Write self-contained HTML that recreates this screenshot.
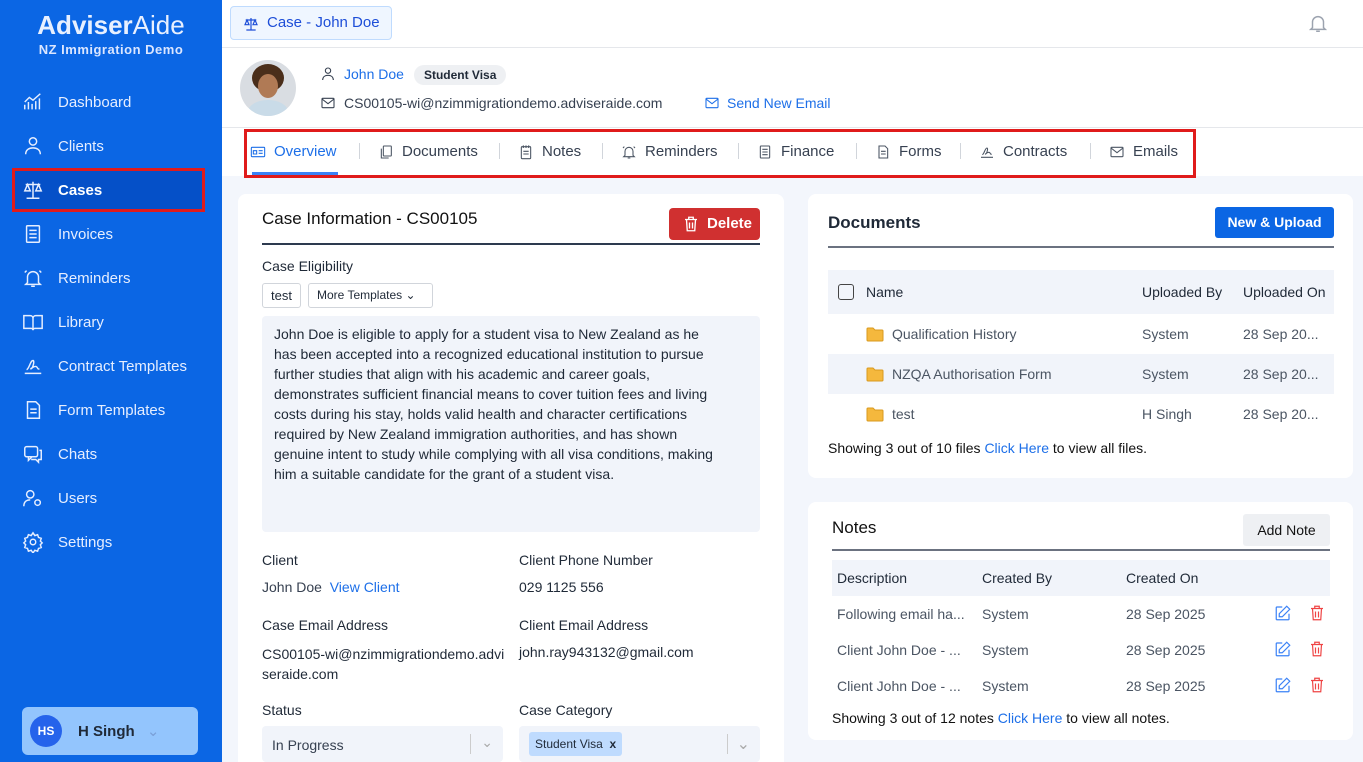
<!DOCTYPE html>
<html><head><meta charset="utf-8"><style>
*{box-sizing:border-box;margin:0;padding:0}
html,body{width:1363px;height:762px;overflow:hidden}
body{font-family:"Liberation Sans",sans-serif;background:#f3f6fc;position:relative;color:#1f2937}
.sb{position:absolute;left:0;top:0;width:222px;height:762px;background:#0b66e4;color:#fff}
.logo{position:absolute;top:10px;left:0;width:222px;text-align:center;font-size:26px;font-weight:bold;color:#e8f0ff}
.logo span{font-weight:normal}
.sub{position:absolute;top:42px;width:222px;text-align:center;font-size:13px;font-weight:bold;color:#dbe6ff;letter-spacing:.5px}
.nav{position:absolute;left:22px;font-size:15px;color:#e6eeff;display:flex;align-items:center;gap:14px}
.nav svg{width:22px;height:22px;stroke:#e6eeff;fill:none;stroke-width:1.6}
.act{position:absolute;left:12px;top:168px;width:193px;height:44px;background:#0550c8;border:3px solid #e01b1b}
.user{position:absolute;left:22px;top:707px;width:176px;height:48px;background:#93c5fd;border-radius:6px}
.hs{position:absolute;left:8px;top:8px;width:32px;height:32px;border-radius:50%;background:#2563eb;color:#fff;font-size:12px;font-weight:bold;text-align:center;line-height:32px}
.top{position:absolute;left:222px;top:0;right:0;height:48px;background:#fff;border-bottom:1px solid #e5e7eb}
.chip{position:absolute;left:8px;top:6px;width:162px;height:34px;border:1px solid #bfdbfe;background:#eff6ff;border-radius:4px;color:#1d4ed8;font-size:15px;line-height:32px;padding-left:36px}
.prof{position:absolute;left:222px;top:48px;right:0;height:80px;background:#fff;border-bottom:1px solid #e5e7eb}
.tabs{position:absolute;left:222px;top:128px;right:0;height:48px;background:#fff}
.tabbox{position:absolute;left:244px;top:129px;width:952px;height:49px;border:3px solid #e01b1b}
.tab{position:absolute;top:143px;font-size:15px;color:#374151;display:flex;align-items:center;gap:8px}
.tab svg,.ic{width:16px;height:16px;fill:none;stroke:#4b5563;stroke-width:1.6}
.sep{position:absolute;top:143px;width:1px;height:16px;background:#d1d5db}
.card{position:absolute;background:#fff;border-radius:8px}
.lbl{position:absolute;font-size:14px;color:#1f2937}
.val{position:absolute;font-size:14px;color:#374151}
a{color:#1d6fe8;text-decoration:none}
.row{position:absolute;left:828px;width:506px;height:40px;font-size:14px;color:#4b5563}
.fold{position:absolute;left:38px;top:12px;width:18px;height:16px}
.ed{position:absolute;left:442px;top:8px;width:18px;height:18px;fill:none;stroke:#3b82f6;stroke-width:1.6}
.tr{position:absolute;left:476px;top:8px;width:18px;height:18px;fill:none;stroke:#ef4444;stroke-width:1.6}
</style></head><body>
<div class="sb">
<div class="logo">Adviser<span>Aide</span></div>
<div class="sub">NZ Immigration Demo</div>
<div class="act"></div>
<div class="nav" style="top:91px"><svg viewBox="0 0 24 24"><path d="M3 20v-5M7 20v-8M11 20v-6M15 20v-9M19 20v-12M3 12l5-5 4 3 8-7"/></svg>Dashboard</div>
<div class="nav" style="top:135px"><svg viewBox="0 0 24 24"><circle cx="12" cy="7" r="4"/><path d="M4 21c0-5 4-7 8-7s8 2 8 7"/></svg>Clients</div>
<div class="nav" style="top:179px;font-weight:bold;color:#fff"><svg viewBox="0 0 24 24"><path d="M12 3v18M5 21h14M4 6h16M6 6l-3 7h6zM18 6l-3 7h6z"/></svg>Cases</div>
<div class="nav" style="top:223px"><svg viewBox="0 0 24 24"><rect x="5" y="3" width="14" height="18" rx="1"/><path d="M8 8h8M8 12h8M8 16h8"/></svg>Invoices</div>
<div class="nav" style="top:267px"><svg viewBox="0 0 24 24"><path d="M6 17V11a6 6 0 0112 0v6l2 2H4zM10 21h4M3 6l2-2M21 6l-2-2"/></svg>Reminders</div>
<div class="nav" style="top:311px"><svg viewBox="0 0 24 24"><path d="M2 5h7a3 3 0 013 3v13a2 2 0 00-2-2H2zM22 5h-7a3 3 0 00-3 3v13a2 2 0 012-2h8z"/></svg>Library</div>
<div class="nav" style="top:355px"><svg viewBox="0 0 24 24"><path d="M3 20h18M5 16c3-1 4-10 7-10 2 0 0 8-2 9s4-4 6-2 1 3 3 2"/></svg>Contract Templates</div>
<div class="nav" style="top:399px"><svg viewBox="0 0 24 24"><path d="M6 3h9l4 4v14H6z"/><path d="M9 11h7M9 15h7"/></svg>Form Templates</div>
<div class="nav" style="top:443px"><svg viewBox="0 0 24 24"><rect x="3" y="4" width="14" height="11" rx="2"/><path d="M7 15v4l4-4M19 8h2v10h-3v3l-3-3h-5"/></svg>Chats</div>
<div class="nav" style="top:487px"><svg viewBox="0 0 24 24"><circle cx="9" cy="8" r="4"/><path d="M2 21c0-5 3-7 7-7M17 14a3 3 0 100 6 3 3 0 000-6z"/></svg>Users</div>
<div class="nav" style="top:531px"><svg viewBox="0 0 24 24"><circle cx="12" cy="12" r="3"/><path d="M12 2l2 3 3-1 1 3 3 1-1 3 2 2-2 2 1 3-3 1-1 3-3-1-2 3-2-3-3 1-1-3-3-1 1-3-2-2 2-2-1-3 3-1 1-3 3 1z"/></svg>Settings</div>
<div class="user"><div class="hs">HS</div><div style="position:absolute;left:56px;top:15px;font-size:15px;font-weight:bold;color:#1f2937">H Singh <span style="color:#7aa0d8;font-weight:normal;margin-left:8px">⌄</span></div></div>
</div>
<div class="top"><div class="chip"><svg style="position:absolute;left:12px;top:9px" width="16" height="16" viewBox="0 0 24 24" fill="none" stroke="#1d4ed8" stroke-width="1.8"><path d="M12 3v18M5 21h14M4 6h16M6 6l-3 7h6zM18 6l-3 7h6z"/></svg>Case - John Doe</div>
<svg style="position:absolute;right:34px;top:12px" width="22" height="22" viewBox="0 0 24 24" fill="none" stroke="#9ca3af" stroke-width="1.6"><path d="M6 17V11a6 6 0 0112 0v6l2 2H4zM10 21h4"/></svg></div>
<div class="prof">
<div style="position:absolute;left:18px;top:12px;width:56px;height:56px;border-radius:50%;background:#d9dde2;overflow:hidden"><div style="position:absolute;left:12px;top:4px;width:32px;height:28px;border-radius:50%;background:#4a2e1a"></div><div style="position:absolute;left:18px;top:14px;width:20px;height:24px;border-radius:50%;background:#b07a55"></div><div style="position:absolute;left:8px;top:40px;width:40px;height:24px;border-radius:50%;background:#c9dbe8"></div></div>
<svg class="ic" style="position:absolute;left:98px;top:18px;stroke:#374151" viewBox="0 0 24 24"><circle cx="12" cy="7" r="4"/><path d="M4 21c0-5 4-7 8-7s8 2 8 7"/></svg>
<div style="position:absolute;left:122px;top:18px;font-size:14px;color:#1d6fe8">John Doe<span style="margin-left:10px;background:#eef0f3;color:#1f2937;font-size:12px;font-weight:bold;padding:3px 10px;border-radius:10px">Student Visa</span></div>
<svg class="ic" style="position:absolute;left:98px;top:47px;stroke:#374151" viewBox="0 0 24 24"><rect x="3" y="5" width="18" height="14" rx="1"/><path d="M3 6l9 7 9-7"/></svg>
<div style="position:absolute;left:122px;top:47px;font-size:14px;color:#374151">CS00105-wi@nzimmigrationdemo.adviseraide.com</div>
<svg class="ic" style="position:absolute;left:482px;top:47px;stroke:#1d6fe8" viewBox="0 0 24 24"><rect x="3" y="5" width="18" height="14" rx="1"/><path d="M3 6l9 7 9-7"/></svg>
<div style="position:absolute;left:505px;top:47px;font-size:14px;color:#1d6fe8">Send New Email</div>
</div>
<div class="tabs"><div style="position:absolute;left:30px;top:44px;width:86px;height:3px;background:#3b82f6"></div></div>
<div class="tabbox"></div>
<div class="tab" style="left:250px;color:#1d6fe8"><svg viewBox="0 0 24 24" style="stroke:#1d6fe8"><rect x="2" y="5" width="20" height="14" rx="1"/><path d="M5 10h5v5H5zM13 10h6M13 14h6"/></svg>Overview</div>
<div class="sep" style="left:359px"></div>
<div class="tab" style="left:378px"><svg viewBox="0 0 24 24"><rect x="8" y="3" width="12" height="15" rx="1"/><path d="M5 7v14h11"/></svg>Documents</div>
<div class="sep" style="left:499px"></div>
<div class="tab" style="left:518px"><svg viewBox="0 0 24 24"><rect x="5" y="4" width="14" height="18" rx="1"/><path d="M8 2v4M12 2v4M16 2v4M8 11h8M8 15h8"/></svg>Notes</div>
<div class="sep" style="left:602px"></div>
<div class="tab" style="left:621px"><svg viewBox="0 0 24 24"><path d="M6 17V11a6 6 0 0112 0v6l2 2H4zM10 21h4M3 6l2-2M21 6l-2-2"/></svg>Reminders</div>
<div class="sep" style="left:738px"></div>
<div class="tab" style="left:757px"><svg viewBox="0 0 24 24"><rect x="5" y="3" width="14" height="18" rx="1"/><path d="M8 8h8M8 12h8M8 16h8"/></svg>Finance</div>
<div class="sep" style="left:856px"></div>
<div class="tab" style="left:875px"><svg viewBox="0 0 24 24"><path d="M6 3h9l4 4v14H6z"/><path d="M9 11h7M9 15h7"/></svg>Forms</div>
<div class="sep" style="left:960px"></div>
<div class="tab" style="left:979px"><svg viewBox="0 0 24 24"><path d="M3 20h18M5 16c3-1 4-10 7-10 2 0 0 8-2 9s4-4 6-2 1 3 3 2"/></svg>Contracts</div>
<div class="sep" style="left:1090px"></div>
<div class="tab" style="left:1109px"><svg viewBox="0 0 24 24"><rect x="3" y="5" width="18" height="14" rx="1"/><path d="M3 6l9 7 9-7"/></svg>Emails</div>

<div class="card" style="left:238px;top:194px;width:546px;height:568px;border-radius:8px 8px 0 0"></div>
<div style="position:absolute;left:262px;top:209px;font-size:17px;color:#111">Case Information - CS00105</div>
<div style="position:absolute;left:669px;top:208px;width:91px;height:32px;background:#d03030;border-radius:4px;color:#fff;font-size:15px;font-weight:bold;line-height:32px;padding-left:38px"><svg style="position:absolute;left:13px;top:7px" width="18" height="18" viewBox="0 0 24 24" fill="none" stroke="#fff" stroke-width="1.8"><path d="M4 6h16M9 6V3h6v3M6 6l1 15h10l1-15M10 10v8M14 10v8"/></svg>Delete</div>
<div style="position:absolute;left:262px;top:243px;width:498px;height:2px;background:#2d3a4f"></div>
<div class="lbl" style="left:262px;top:258px">Case Eligibility</div>
<div style="position:absolute;left:262px;top:283px;width:39px;height:25px;border:1px solid #d1d5db;border-radius:3px;font-size:13px;text-align:center;line-height:23px">test</div>
<div style="position:absolute;left:308px;top:283px;width:125px;height:25px;border:1px solid #d1d5db;border-radius:3px;font-size:12px;padding-left:8px;line-height:23px">More Templates ⌄</div>
<div style="position:absolute;left:262px;top:316px;width:498px;height:216px;background:#f1f4fa;border-radius:4px;padding:8px 42px 8px 12px;font-size:14px;line-height:20px;color:#1f2937">John Doe is eligible to apply for a student visa to New Zealand as he has been accepted into a recognized educational institution to pursue further studies that align with his academic and career goals, demonstrates sufficient financial means to cover tuition fees and living costs during his stay, holds valid health and character certifications required by New Zealand immigration authorities, and has shown genuine intent to study while complying with all visa conditions, making him a suitable candidate for the grant of a student visa.</div>
<div class="lbl" style="left:262px;top:552px">Client</div>
<div class="val" style="left:262px;top:579px">John Doe &nbsp;<a>View Client</a></div>
<div class="lbl" style="left:519px;top:552px">Client Phone Number</div>
<div class="val" style="left:519px;top:579px;color:#1f2937">029 1125 556</div>
<div class="lbl" style="left:262px;top:617px">Case Email Address</div>
<div class="val" style="left:262px;top:644px;width:245px;line-height:20px;color:#1f2937;word-break:break-all">CS00105-wi@nzimmigrationdemo.adviseraide.com</div>
<div class="lbl" style="left:519px;top:617px">Client Email Address</div>
<div class="val" style="left:519px;top:644px;color:#1f2937">john.ray943132@gmail.com</div>
<div class="lbl" style="left:262px;top:702px">Status</div>
<div style="position:absolute;left:262px;top:726px;width:241px;height:36px;background:#f1f4fa;border-radius:4px;font-size:14px;padding:11px 10px;color:#374151">In Progress<span style="position:absolute;right:32px;top:8px;width:1px;height:20px;background:#ccc"></span><span style="position:absolute;right:10px;top:8px;color:#aaa">⌄</span></div>
<div class="lbl" style="left:519px;top:702px">Case Category</div>
<div style="position:absolute;left:519px;top:726px;width:241px;height:36px;background:#f1f4fa;border-radius:4px"><span style="position:absolute;left:10px;top:6px;background:#bfdbfe;border-radius:3px;font-size:12px;padding:5px 6px">Student Visa &nbsp;<b>x</b></span><span style="position:absolute;right:32px;top:8px;width:1px;height:20px;background:#ccc"></span><span style="position:absolute;right:10px;top:8px;color:#aaa">⌄</span></div>

<div class="card" style="left:808px;top:194px;width:545px;height:284px"></div>
<div style="position:absolute;left:828px;top:213px;font-size:17px;font-weight:bold;color:#1f2937">Documents</div>
<div style="position:absolute;left:1215px;top:207px;width:119px;height:31px;background:#0b66e4;border-radius:3px;color:#fff;font-size:14px;font-weight:bold;text-align:center;line-height:31px">New &amp; Upload</div>
<div style="position:absolute;left:828px;top:246px;width:506px;height:2px;background:#6b7280"></div>
<div class="row" style="top:270px;height:44px;background:#f1f4fa;color:#1f2937"><span style="position:absolute;left:10px;top:14px;width:16px;height:16px;border:1.5px solid #444;border-radius:3px"></span><span style="position:absolute;left:38px;top:14px">Name</span><span style="position:absolute;left:314px;top:14px">Uploaded By</span><span style="position:absolute;left:415px;top:14px">Uploaded On</span></div>
<div class="row" style="top:314px"><svg class="fold" viewBox="0 0 18 16"><path d="M1 3a1 1 0 011-1h5l2 2h7a1 1 0 011 1v9a1 1 0 01-1 1H2a1 1 0 01-1-1z" fill="#f5b83d" stroke="#d99a1e"/></svg><span style="position:absolute;left:64px;top:12px">Qualification History</span><span style="position:absolute;left:314px;top:12px">System</span><span style="position:absolute;left:415px;top:12px">28 Sep 20...</span></div>
<div class="row" style="top:354px;background:#f1f4fa"><svg class="fold" viewBox="0 0 18 16"><path d="M1 3a1 1 0 011-1h5l2 2h7a1 1 0 011 1v9a1 1 0 01-1 1H2a1 1 0 01-1-1z" fill="#f5b83d" stroke="#d99a1e"/></svg><span style="position:absolute;left:64px;top:12px">NZQA Authorisation Form</span><span style="position:absolute;left:314px;top:12px">System</span><span style="position:absolute;left:415px;top:12px">28 Sep 20...</span></div>
<div class="row" style="top:394px"><svg class="fold" viewBox="0 0 18 16"><path d="M1 3a1 1 0 011-1h5l2 2h7a1 1 0 011 1v9a1 1 0 01-1 1H2a1 1 0 01-1-1z" fill="#f5b83d" stroke="#d99a1e"/></svg><span style="position:absolute;left:64px;top:12px">test</span><span style="position:absolute;left:314px;top:12px">H Singh</span><span style="position:absolute;left:415px;top:12px">28 Sep 20...</span></div>
<div style="position:absolute;left:828px;top:440px;font-size:14px;color:#111">Showing 3 out of 10 files <a>Click Here</a> to view all files.</div>

<div class="card" style="left:808px;top:502px;width:545px;height:238px"></div>
<div style="position:absolute;left:832px;top:518px;font-size:17px;color:#111">Notes</div>
<div style="position:absolute;left:1243px;top:514px;width:87px;height:32px;background:#eef0f3;border-radius:3px;font-size:14px;text-align:center;line-height:32px;color:#111">Add Note</div>
<div style="position:absolute;left:832px;top:549px;width:498px;height:2px;background:#6b7280"></div>
<div class="row" style="left:832px;width:498px;top:560px;height:36px;background:#f1f4fa;color:#1f2937"><span style="position:absolute;left:5px;top:10px">Description</span><span style="position:absolute;left:150px;top:10px">Created By</span><span style="position:absolute;left:294px;top:10px">Created On</span></div>
<div class="row" style="left:832px;width:498px;top:596px"><span style="position:absolute;left:5px;top:10px">Following email ha...</span><span style="position:absolute;left:150px;top:10px">System</span><span style="position:absolute;left:294px;top:10px">28 Sep 2025</span><svg class="ed" viewBox="0 0 24 24"><path d="M20 13v7a1 1 0 01-1 1H4a1 1 0 01-1-1V5a1 1 0 011-1h7M17 3l4 4-10 10H7v-4z"/></svg><svg class="tr" viewBox="0 0 24 24"><path d="M4 6h16M9 6V3h6v3M6 6l1 15h10l1-15M10 10v8M14 10v8"/></svg></div>
<div class="row" style="left:832px;width:498px;top:632px"><span style="position:absolute;left:5px;top:10px">Client John Doe - ...</span><span style="position:absolute;left:150px;top:10px">System</span><span style="position:absolute;left:294px;top:10px">28 Sep 2025</span><svg class="ed" viewBox="0 0 24 24"><path d="M20 13v7a1 1 0 01-1 1H4a1 1 0 01-1-1V5a1 1 0 011-1h7M17 3l4 4-10 10H7v-4z"/></svg><svg class="tr" viewBox="0 0 24 24"><path d="M4 6h16M9 6V3h6v3M6 6l1 15h10l1-15M10 10v8M14 10v8"/></svg></div>
<div class="row" style="left:832px;width:498px;top:668px"><span style="position:absolute;left:5px;top:10px">Client John Doe - ...</span><span style="position:absolute;left:150px;top:10px">System</span><span style="position:absolute;left:294px;top:10px">28 Sep 2025</span><svg class="ed" viewBox="0 0 24 24"><path d="M20 13v7a1 1 0 01-1 1H4a1 1 0 01-1-1V5a1 1 0 011-1h7M17 3l4 4-10 10H7v-4z"/></svg><svg class="tr" viewBox="0 0 24 24"><path d="M4 6h16M9 6V3h6v3M6 6l1 15h10l1-15M10 10v8M14 10v8"/></svg></div>
<div style="position:absolute;left:832px;top:710px;font-size:14px;color:#111">Showing 3 out of 12 notes <a>Click Here</a> to view all notes.</div>
</body></html>
